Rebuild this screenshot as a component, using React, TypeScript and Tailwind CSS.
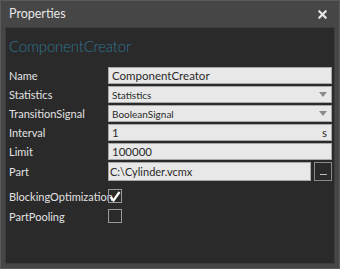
import { X } from "lucide-react";

const font = { fontFamily: 'Lato, "Noto Sans", sans-serif' };

function Field({ children, right, tall }: { children: React.ReactNode; right?: React.ReactNode; tall?: boolean }) {
  return (
    <div
      className={`flex items-center justify-between ${tall ? "h-[19px] pl-[1px]" : "h-[17px] pl-[3px]"} bg-[#e8e8e8] border border-[#a8a8a8] pr-[3px] text-[11.5px] text-[#2a2a2a] leading-none`}
    >
      <span>{children}</span>
      {right}
    </div>
  );
}

function Arrow() {
  return (
    <svg width="8" height="5" viewBox="0 0 8 5" className="mr-[1px]">
      <path d="M0 0 H8 L4 5 Z" fill="#8a8a8a" />
    </svg>
  );
}

function Check({ checked }: { checked?: boolean }) {
  return (
    <div className="w-[14px] h-[14px] border border-[#9a9a9a] flex items-center justify-center">
      {checked && (
        <svg width="12" height="11" viewBox="0 0 12 11">
          <path d="M1.5 6 L4.5 9.5 L10.5 1" stroke="#ffffff" strokeWidth="2.2" fill="none" />
        </svg>
      )}
    </div>
  );
}

export default function App() {
  const rows: [string, React.ReactNode][] = [
    ["Name", <Field>ComponentCreator</Field>],
    ["Statistics", <Field right={<Arrow />}><span className="text-[10px]">Statistics</span></Field>],
    ["TransitionSignal", <Field right={<Arrow />}><span className="text-[10px]">BooleanSignal</span></Field>],
    ["Interval", <Field right={<span className="mr-[1px]">s</span>}>1</Field>],
    ["Limit", <Field>100000</Field>],
  ];

  return (
    <div className="w-[340px] h-[269px] bg-[#464646] border border-[#5a5a5a] flex flex-col" style={font}>
      <div className="h-[26px] flex items-center justify-between pl-[8px] pr-[10px]">
        <span className="text-[12.5px] text-[#e6e6e6]">Properties</span>
        <X size={13} strokeWidth={4} className="text-[#e8e8e8]" />
      </div>
      <div className="mx-[4px] h-[237px] bg-[#2a2a2a] border border-[#3c3c3c] pl-[3px] pr-[2px]">
        <div className="text-[15px] tracking-[-0.2px] text-[#2f7391] font-light mt-[8px] mb-[11px] leading-[20px]">
          ComponentCreator
        </div>
        <div className="flex flex-col gap-[2px]">
          {rows.map(([label, field]) => (
            <div key={label} className="grid grid-cols-[99px_1fr] items-center">
              <span className="text-[11px] text-[#e2e2e2] leading-none">{label}</span>
              {field}
            </div>
          ))}
          <div className="grid grid-cols-[99px_1fr] items-center">
            <span className="text-[11px] text-[#e2e2e2] leading-none">Part</span>
            <div className="flex gap-[3px]">
              <div className="flex-1">
                <Field tall>
                  <span className="text-[11px]">C:\Cylinder.vcmx</span>
                </Field>
              </div>
              <div className="w-[18px] h-[19px] border border-[#8a8a8a] flex items-end justify-center pb-[5px]">
                <div className="w-[7px] h-[1px] bg-[#bbb]" />
              </div>
            </div>
          </div>
          <div className="grid grid-cols-[99px_1fr] items-center h-[18px] mt-[4px]">
            <span className="text-[11px] text-[#e2e2e2] leading-none">BlockingOptimization</span>
            <Check checked />
          </div>
          <div className="grid grid-cols-[99px_1fr] items-center h-[18px]">
            <span className="text-[11px] text-[#e2e2e2] leading-none">PartPooling</span>
            <Check />
          </div>
        </div>
      </div>
    </div>
  );
}
